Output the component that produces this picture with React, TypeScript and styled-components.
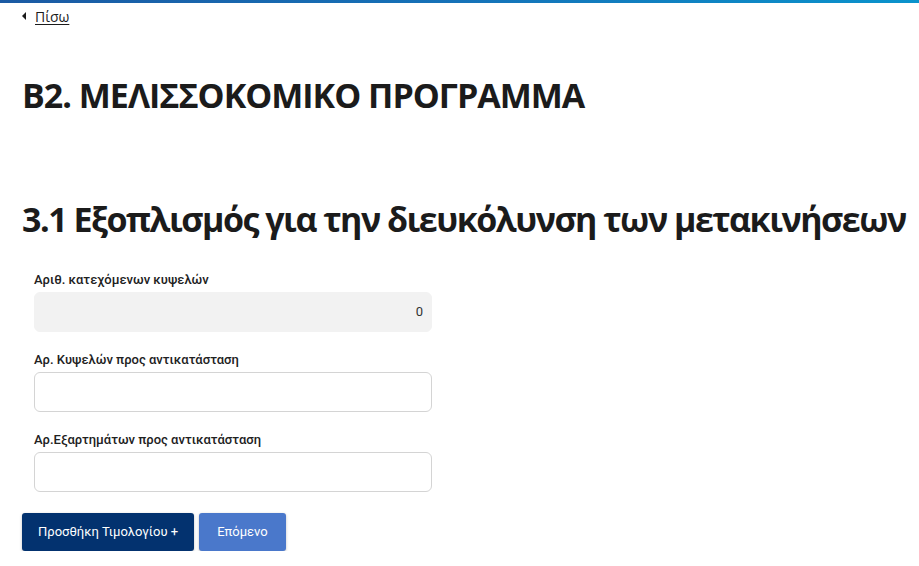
import React from "react";
import styled, { createGlobalStyle } from "styled-components";

const GlobalStyle = createGlobalStyle`
  body {
    margin: 0;
    background: #fff;
    font-family: "Open Sans", "Liberation Sans", sans-serif;
    color: #1b1b1b;
  }
`;

const TopBar = styled.div`
  height: 3px;
  background: linear-gradient(90deg, #1b5aa3 0%, #1572b8 50%, #0a93cc 100%);
`;

const Page = styled.div`
  padding: 0 22px;
`;

const BackLink = styled.a`
  display: inline-flex;
  align-items: center;
  gap: 9px;
  margin-top: 3px;
  font-size: 14px;
  color: #1b1b1b;
  text-decoration: none;
  span {
    text-decoration: underline;
    text-underline-offset: 2px;
  }
`;

const Caret = styled.i`
  width: 0;
  height: 0;
  border-top: 4px solid transparent;
  border-bottom: 4px solid transparent;
  border-right: 4px solid #1b1b1b;
`;

const Title = styled.h1`
  margin: 47px 0 0;
  font-size: 34px;
  font-weight: 700;
  letter-spacing: -1px;
  line-height: 44px;
  color: #1b1b1b;
`;

const Section = styled.h2`
  margin: 80px 0 0;
  font-size: 34px;
  font-weight: 700;
  letter-spacing: -1.5px;
  line-height: 44px;
  color: #1b1b1b;
  white-space: nowrap;
`;

const Form = styled.div`
  padding: 0 12px;
  margin-top: 31px;
  width: 398px;
  display: flex;
  flex-direction: column;
  gap: 20px;
`;

const Field = styled.div`
  display: flex;
  flex-direction: column;
  gap: 4px;
`;

const Label = styled.label`
  font-family: Roboto, "Liberation Sans", sans-serif;
  font-size: 13px;
  font-weight: 500;
  color: #212121;
  line-height: 16px;
`;

const Input = styled.input<{ $disabled?: boolean }>`
  box-sizing: border-box;
  height: 40px;
  width: 100%;
  border-radius: 6px;
  border: 1px solid ${(p) => (p.$disabled ? "#f2f2f2" : "#d4d4d4")};
  background: ${(p) => (p.$disabled ? "#f2f2f2" : "#fff")};
  font-family: Roboto, "Liberation Sans", sans-serif;
  font-size: 13px;
  color: #333;
  text-align: right;
  padding: 0 8px;
  outline: none;
`;

const Buttons = styled.div`
  display: flex;
  gap: 5px;
  margin-top: 21px;
`;

const Button = styled.button<{ $light?: boolean }>`
  height: 38px;
  padding: 0 ${(p) => (p.$light ? "18px" : "16px")};
  border: none;
  border-radius: 3px;
  background: ${(p) => (p.$light ? "#4a78cb" : "#03326f")};
  color: #fff;
  font-family: Roboto, "Liberation Sans", sans-serif;
  font-size: 13px;
  box-shadow: 0 1px 3px rgba(0, 0, 0, 0.25);
  cursor: pointer;
`;

export default function App() {
  return (
    <>
      <GlobalStyle />
      <TopBar />
      <Page>
        <BackLink href="#">
          <Caret />
          <span>Πίσω</span>
        </BackLink>
        <Title>B2. ΜΕΛΙΣΣΟΚΟΜΙΚΟ ΠΡΟΓΡΑΜΜΑ</Title>
        <Section>3.1 Εξοπλισμός για την διευκόλυνση των μετακινήσεων</Section>
        <Form>
          <Field>
            <Label>Αριθ. κατεχόμενων κυψελών</Label>
            <Input $disabled disabled value="0" readOnly />
          </Field>
          <Field>
            <Label>Αρ. Κυψελών προς αντικατάσταση</Label>
            <Input />
          </Field>
          <Field>
            <Label>Αρ.Εξαρτημάτων προς αντικατάσταση</Label>
            <Input />
          </Field>
        </Form>
        <Buttons>
          <Button>Προσθήκη Τιμολογίου +</Button>
          <Button $light>Επόμενο</Button>
        </Buttons>
      </Page>
    </>
  );
}
